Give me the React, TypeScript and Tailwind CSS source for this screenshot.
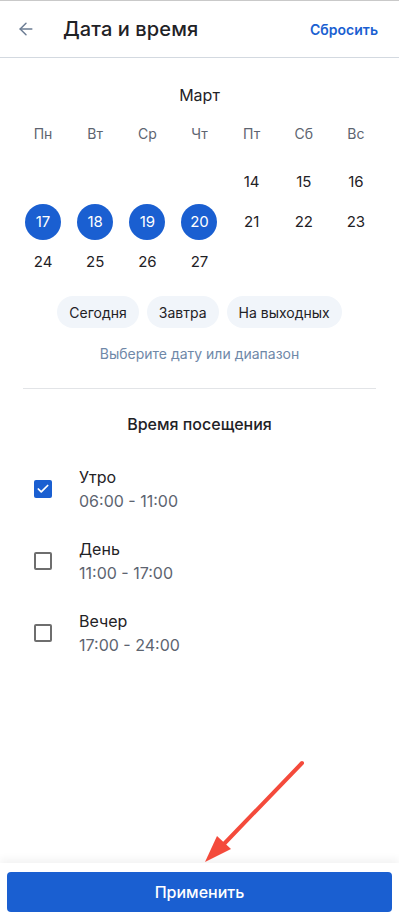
import { ArrowLeft, Check } from "lucide-react";

const weekdays = ["Пн", "Вт", "Ср", "Чт", "Пт", "Сб", "Вс"];

const weeks: (number | null)[][] = [
  [null, null, null, null, 14, 15, 16],
  [17, 18, 19, 20, 21, 22, 23],
  [24, 25, 26, 27, null, null, null],
];

const selected = [17, 18, 19, 20];

const slots = [
  { label: "Утро", time: "06:00 - 11:00", checked: true },
  { label: "День", time: "11:00 - 17:00", checked: false },
  { label: "Вечер", time: "17:00 - 24:00", checked: false },
];

export default function App() {
  return (
    <div
      className="relative flex h-[919px] w-[399px] flex-col overflow-hidden bg-white text-[#1f2226]"
      style={{ fontFamily: "Inter, 'Noto Sans', sans-serif" }}
    >
      {/* header */}
      <header className="flex h-[58px] flex-shrink-0 items-center border-t border-b border-t-[#c9c9c9] border-b-[#d3d9e0] pl-[16px] pr-[21px]">
        <ArrowLeft className="h-5 w-5 text-[#6b7c93]" strokeWidth={1.75} />
        <h1 className="ml-[27px] flex-1 text-[20px] font-medium tracking-[0.1px]">Дата и время</h1>
        <button className="text-[14px] font-semibold text-[#1a5fd1]">Сбросить</button>
      </header>

      {/* calendar */}
      <section className="px-[17px] pt-[26px]">
        <div className="text-center text-[16px] leading-[22px]">Март</div>
        <div className="mt-[18px] grid grid-cols-7">
          {weekdays.map((d) => (
            <div key={d} className="text-center text-[14px] leading-[20px] text-[#5d6470]">
              {d}
            </div>
          ))}
        </div>
        <div className="mt-[18px] flex flex-col">
          {weeks.map((w, i) => (
            <div key={i} className="grid h-[40px] grid-cols-7">
              {w.map((n, j) => (
                <div key={j} className="flex items-center justify-center">
                  {n !== null &&
                    (selected.includes(n) ? (
                      <span className="flex h-[36px] w-[36px] items-center justify-center rounded-full bg-[#1a5fd1] text-[15px] text-white">
                        {n}
                      </span>
                    ) : (
                      <span className="text-[15px]">{n}</span>
                    ))}
                </div>
              ))}
            </div>
          ))}
        </div>

        <div className="mt-[14px] flex justify-center gap-[8px]">
          {["Сегодня", "Завтра", "На выходных"].map((c) => (
            <button key={c} className="h-[32px] rounded-full bg-[#f1f5fa] px-[12px] text-[14px]">
              {c}
            </button>
          ))}
        </div>
        <p className="mt-[15px] text-center text-[14px] text-[#6f88a8]">Выберите дату или диапазон</p>
      </section>

      <div className="mx-[23px] mt-[24px] h-px bg-[#e2e4e7]" />

      {/* time */}
      <section className="pt-[24px]">
        <h2 className="text-center text-[16px] font-medium leading-[22px]">Время посещения</h2>
        <div className="mt-[30px] flex flex-col gap-[24px]">
          {slots.map((s) => (
            <div key={s.label} className="flex h-[48px] items-center pl-[34px]">
              {s.checked ? (
                <span className="flex h-[18px] w-[18px] items-center justify-center rounded-[2px] bg-[#1a5fd1]">
                  <Check className="h-[14px] w-[14px] text-white" strokeWidth={3} />
                </span>
              ) : (
                <span className="h-[18px] w-[18px] rounded-[2px] border-2 border-[#6e6e6e]" />
              )}
              <div className="ml-[27px] flex flex-col">
                <span className="text-[16px] leading-[24px]">{s.label}</span>
                <span className="text-[16px] leading-[24px] text-[#5d6470]">{s.time}</span>
              </div>
            </div>
          ))}
        </div>
      </section>

      <div className="flex-1" />

      {/* footer */}
      <footer className="flex-shrink-0 bg-white px-[7px] pt-[9px] pb-[7px] shadow-[0_-4px_8px_rgba(0,0,0,0.05)]">
        <button className="flex h-[40px] w-full items-center justify-center rounded-[4px] bg-[#1a5fd1] text-[16px] font-medium text-white">
          Применить
        </button>
      </footer>

      {/* annotation arrow */}
      <svg className="pointer-events-none absolute left-0 top-0" width="399" height="919" viewBox="0 0 399 919">
        <line x1="302" y1="763" x2="222" y2="846" stroke="#f44a3b" strokeWidth="4" strokeLinecap="round" />
        <polygon points="205,862 217,836 231,849" fill="#f44a3b" />
      </svg>
    </div>
  );
}
